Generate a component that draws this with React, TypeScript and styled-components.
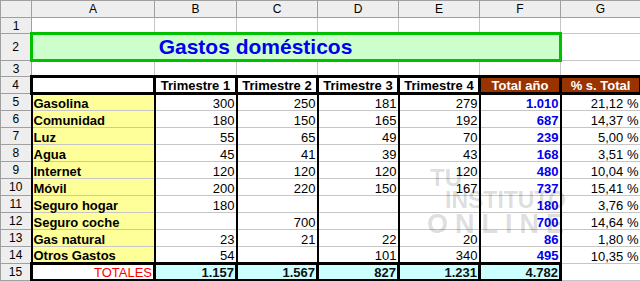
import React from "react";
import styled, { createGlobalStyle } from "styled-components";

const Global = createGlobalStyle`
  html, body { margin: 0; padding: 0; background: #fff; overflow: hidden; }
  body { font-family: "Liberation Sans", Arial, sans-serif; }
`;

const GRID = "1px solid #c6c6c6";
const HDR = "1px solid #a0a0a0";

const Wrap = styled.div`
  position: relative;
  width: 640px;
  height: 281px;
  overflow: hidden;
`;

const Sheet = styled.table`
  border-collapse: collapse;
  table-layout: fixed;
  width: 640px;
  font-family: "Liberation Sans", Arial, sans-serif;
  font-size: 13px;
  color: #000;
`;

const Row = styled.tr<{ $h: number }>`
  height: ${(p) => p.$h}px;
`;

const Corner = styled.th`
  background: #eeeeee;
  border: ${HDR};
  padding: 0;
`;

const ColHead = styled.th`
  background: #eeeeee;
  border: ${HDR};
  font-weight: normal;
  font-size: 12px;
  line-height: 14px;
  padding: 0;
  text-align: center;
  vertical-align: middle;
`;

const RowHead = styled.th`
  background: #eeeeee;
  border: ${HDR};
  font-weight: normal;
  font-size: 12px;
  line-height: 14px;
  padding: 0;
  text-align: center;
  vertical-align: middle;
`;

const Blank = styled.td`
  border: ${GRID};
  padding: 0;
`;

const TitleCell = styled.td`
  background: #ccffcc;
  border: 3px solid #00c000;
  color: #0000ee;
  font-weight: bold;
  font-size: 21px;
  line-height: 22px;
  text-align: center;
  vertical-align: middle;
  padding: 0 81px 0 0;
`;

const HeaderCell = styled.td<{ $dark?: boolean }>`
  background: ${(p) => (p.$dark ? "#993300" : "#ffffff")};
  color: ${(p) => (p.$dark ? "#ffffff" : "#000000")};
  border: 3px solid #000;
  font-weight: bold;
  line-height: 13px;
  text-align: center;
  vertical-align: middle;
  padding: 0;
  white-space: nowrap;
`;

const LabelCell = styled.td`
  background: #ffff99;
  border-top: ${GRID};
  border-bottom: ${GRID};
  border-left: 2px solid #000;
  border-right: 2px solid #000;
  font-weight: bold;
  line-height: 13px;
  vertical-align: bottom;
  padding: 0 1px 0 1px;
  white-space: nowrap;
`;

const ValueCell = styled.td<{ $sum?: boolean }>`
  background: #fff;
  border-top: ${GRID};
  border-bottom: ${GRID};
  border-left: 2px solid #000;
  border-right: 2px solid #000;
  color: ${(p) => (p.$sum ? "#0000ee" : "#000")};
  font-weight: ${(p) => (p.$sum ? "bold" : "normal")};
  line-height: 13px;
  text-align: right;
  vertical-align: bottom;
  padding: 0 1px 0 0;
  white-space: nowrap;
`;

const TotalsLabel = styled.td`
  background: #fff;
  border: 3px solid #000;
  color: #ff0000;
  line-height: 13px;
  text-align: right;
  vertical-align: bottom;
  padding: 0 1px 0 0;
`;

const TotalsCell = styled.td`
  background: #ccffff;
  border: 3px solid #000;
  color: #111;
  font-weight: bold;
  line-height: 13px;
  text-align: right;
  vertical-align: bottom;
  padding: 0 1px 0 0;
`;

const Watermark = styled.div`
  position: absolute;
  left: 427px;
  top: 166px;
  width: 150px;
  pointer-events: none;
  color: rgba(0, 0, 0, 0.15);
  font-family: "Liberation Sans", Arial, sans-serif;
  font-weight: bold;
  display: flex;
  flex-direction: column;
  align-items: flex-start;
  line-height: 1;
`;

const WmLine = styled.span<{ $size: number; $indent: number; $spacing: number }>`
  display: block;
  font-size: ${(p) => p.$size}px;
  margin-left: ${(p) => p.$indent}px;
  letter-spacing: ${(p) => p.$spacing}px;
  height: ${(p) => Math.round(p.$size * 0.95)}px;
  white-space: nowrap;
`;

const cols = ["A", "B", "C", "D", "E", "F", "G"];
const widths = [31, 123, 82, 81, 81, 81, 81, 80];

type Item = { label: string; v: string[]; total: string; pct: string };

const items: Item[] = [
  { label: "Gasolina", v: ["300", "250", "181", "279"], total: "1.010", pct: "21,12 %" },
  { label: "Comunidad", v: ["180", "150", "165", "192"], total: "687", pct: "14,37 %" },
  { label: "Luz", v: ["55", "65", "49", "70"], total: "239", pct: "5,00 %" },
  { label: "Agua", v: ["45", "41", "39", "43"], total: "168", pct: "3,51 %" },
  { label: "Internet", v: ["120", "120", "120", "120"], total: "480", pct: "10,04 %" },
  { label: "Móvil", v: ["200", "220", "150", "167"], total: "737", pct: "15,41 %" },
  { label: "Seguro hogar", v: ["180", "", "", ""], total: "180", pct: "3,76 %" },
  { label: "Seguro coche", v: ["", "700", "", ""], total: "700", pct: "14,64 %" },
  { label: "Gas natural", v: ["23", "21", "22", "20"], total: "86", pct: "1,80 %" },
  { label: "Otros Gastos", v: ["54", "", "101", "340"], total: "495", pct: "10,35 %" },
];

const totals = ["1.157", "1.567", "827", "1.231", "4.782"];

export default function App() {
  return (
    <Wrap>
      <Global />
      <Sheet>
        <colgroup>
          {widths.map((w, i) => (
            <col key={i} style={{ width: w }} />
          ))}
        </colgroup>
        <tbody>
          <Row $h={17}>
            <Corner />
            {cols.map((c) => (
              <ColHead key={c}>{c}</ColHead>
            ))}
          </Row>
          <Row $h={16}>
            <RowHead>1</RowHead>
            {cols.map((c) => (
              <Blank key={c} />
            ))}
          </Row>
          <Row $h={27}>
            <RowHead>2</RowHead>
            <TitleCell colSpan={6}>Gastos domésticos</TitleCell>
            <Blank />
          </Row>
          <Row $h={16}>
            <RowHead>3</RowHead>
            {cols.map((c) => (
              <Blank key={c} />
            ))}
          </Row>
          <Row $h={17}>
            <RowHead>4</RowHead>
            <HeaderCell />
            <HeaderCell>Trimestre 1</HeaderCell>
            <HeaderCell>Trimestre 2</HeaderCell>
            <HeaderCell>Trimestre 3</HeaderCell>
            <HeaderCell>Trimestre 4</HeaderCell>
            <HeaderCell $dark>Total año</HeaderCell>
            <HeaderCell $dark>% s. Total</HeaderCell>
          </Row>
          {items.map((it, i) => (
            <Row $h={17} key={it.label}>
              <RowHead>{i + 5}</RowHead>
              <LabelCell>{it.label}</LabelCell>
              {it.v.map((v, j) => (
                <ValueCell key={j}>{v}</ValueCell>
              ))}
              <ValueCell $sum>{it.total}</ValueCell>
              <ValueCell>{it.pct}</ValueCell>
            </Row>
          ))}
          <Row $h={17}>
            <RowHead>15</RowHead>
            <TotalsLabel>TOTALES</TotalsLabel>
            {totals.map((t) => (
              <TotalsCell key={t}>{t}</TotalsCell>
            ))}
            <Blank />
          </Row>
        </tbody>
      </Sheet>
      <Watermark aria-hidden="true">
        <WmLine $size={24} $indent={3} $spacing={0}>TU</WmLine>
        <WmLine $size={23} $indent={18} $spacing={0}>INSTITUTO</WmLine>
        <WmLine $size={27} $indent={0} $spacing={7}>ONLINE</WmLine>
      </Watermark>
    </Wrap>
  );
}
